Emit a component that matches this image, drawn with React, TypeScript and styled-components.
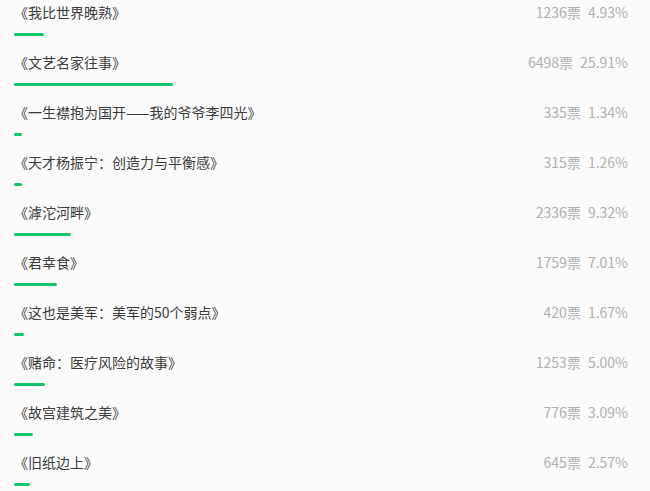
import React from 'react'
import styled, { createGlobalStyle } from 'styled-components'

const GlobalStyle = createGlobalStyle`
  html, body {
    margin: 0;
    padding: 0;
    background: #fafafa;
  }
  body {
    font-family: "Noto Sans CJK SC", "Noto Sans", sans-serif;
  }
`

interface Book {
  title: string
  votes: number
  percent: number
}

const books: Book[] = [
  { title: '《我比世界晚熟》', votes: 1236, percent: 4.93 },
  { title: '《文艺名家往事》', votes: 6498, percent: 25.91 },
  { title: '《一生襟抱为国开——我的爷爷李四光》', votes: 335, percent: 1.34 },
  { title: '《天才杨振宁：创造力与平衡感》', votes: 315, percent: 1.26 },
  { title: '《滹沱河畔》', votes: 2336, percent: 9.32 },
  { title: '《君幸食》', votes: 1759, percent: 7.01 },
  { title: '《这也是美军：美军的50个弱点》', votes: 420, percent: 1.67 },
  { title: '《赌命：医疗风险的故事》', votes: 1253, percent: 5.0 },
  { title: '《故宫建筑之美》', votes: 776, percent: 3.09 },
  { title: '《旧纸边上》', votes: 645, percent: 2.57 },
]

const App = () => {
  return (
    <>
      <GlobalStyle />
      <List>
        {books.map((b) => (
          <Row key={b.title}>
            <Head>
              <Title>{b.title}</Title>
              <Stat>
                {b.votes}票<Pct>{b.percent.toFixed(2)}%</Pct>
              </Stat>
            </Head>
            <Track>
              <Bar style={{ width: `${b.percent}%` }} />
            </Track>
          </Row>
        ))}
      </List>
    </>
  )
}

export default App

const List = styled.div`
  display: flex;
  flex-direction: column;
  padding: 2px 22px 0 14px;
`

const Row = styled.div`
  height: 50px;
  display: flex;
  flex-direction: column;
`

const Head = styled.div`
  display: flex;
  justify-content: space-between;
  align-items: center;
  height: 20px;
  line-height: 20px;
  font-size: 14px;
`

const Title = styled.div`
  color: #3c3c3c;
`

const Stat = styled.div`
  color: #b0b0b0;
`

const Pct = styled.span`
  margin-left: 7px;
`

const Track = styled.div`
  margin-top: 11px;
  height: 3px;
`

const Bar = styled.div`
  height: 100%;
  background: #12c46a;
  border-radius: 2px;
`
